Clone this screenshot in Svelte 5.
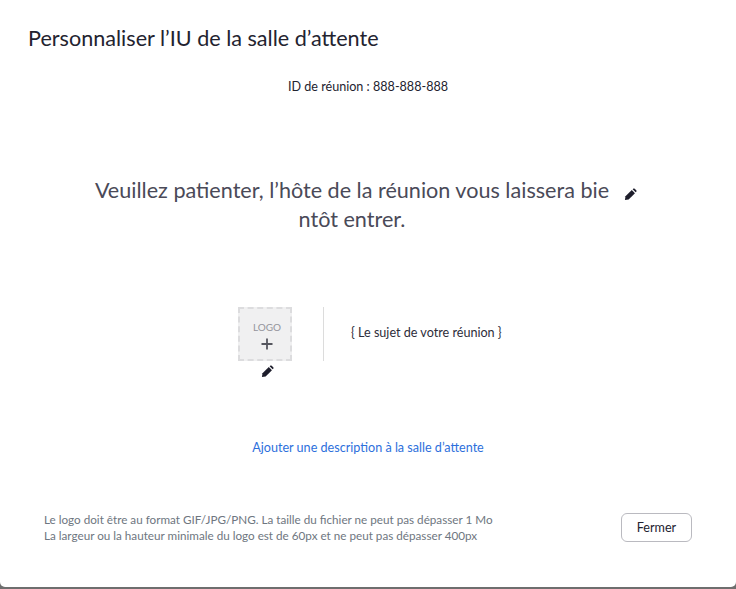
<script>
	const notes = [
		'Le logo doit être au format GIF/JPG/PNG. La taille du fichier ne peut pas dépasser 1 Mo',
		'La largeur ou la hauteur minimale du logo est de 60px et ne peut pas dépasser 400px'
	];
</script>

{#snippet pencil(cls)}
	<svg class={cls} viewBox="0 0 14 14" aria-hidden="true">
		<path d="M1 13l.6-4L8.400 2.200l3.400 3.400L5 12.400 1 13z" fill="#1d1d2b" />
		<path d="M9.300 1.400l.6-.6c.5-.5 1.100-.5 1.600 0l1.700 1.700c.5.500.5 1.100 0 1.600l-.6.600-3.300-3.300z" fill="#1d1d2b" />
	</svg>
{/snippet}

<div class="dialog">
	<h1>Personnaliser l’IU de la salle d’attente</h1>
	<p class="meeting-id">ID de réunion : 888-888-888</p>

	<div class="message">
		<h2>Veuillez patienter, l’hôte de la réunion vous laissera bientôt entrer.</h2>
		{@render pencil('edit-title')}
	</div>

	<div class="brand">
		<div class="logo-col">
			<div class="logo">
				<span>LOGO</span>
				<svg viewBox="0 0 12 12" width="12" height="12" aria-hidden="true">
					<path d="M6 .5v11M.5 6h11" stroke="#55565f" stroke-width="1.800" fill="none" />
				</svg>
			</div>
			{@render pencil('edit-logo')}
		</div>
		<div class="divider"></div>
		<div class="topic">{'{'} Le sujet de votre réunion {'}'}</div>
	</div>

	<a class="add-desc" href="#desc">Ajouter une description à la salle d’attente</a>

	<div class="footer">
		<div class="notes">
			{#each notes as note}
				<p>{note}</p>
			{/each}
		</div>
		<button>Fermer</button>
	</div>
</div>

<style>
	:global(body) {
		margin: 0;
		background: #6e6e6e;
	}

	.dialog {
		box-sizing: border-box;
		width: 736px;
		height: 587px;
		padding-top: 24px;
		display: flex;
		flex-direction: column;
		font-family: Lato, 'Open Sans', sans-serif;
		background: #fff;
		border-radius: 0 0 5px 5px;
		overflow: hidden;
	}

	h1 {
		margin: 0 0 0 28px;
		font-size: 21.6px;
		line-height: 28px;
		font-weight: 400;
		color: #23232f;
	}

	.meeting-id {
		margin: 26px 0 0;
		font-size: 12.6px;
		line-height: 18px;
		text-align: center;
		color: #23232f;
	}

	.message {
		margin: 80px 0 0 93px;
		display: flex;
		align-items: flex-start;
	}

	h2 {
		margin: 0;
		width: 518px;
		font-size: 21.6px;
		line-height: 29px;
		font-weight: 400;
		text-align: center;
		word-break: break-all;
		color: #4a4a58;
	}

	.edit-title {
		width: 13px;
		height: 13px;
		margin: 12px 0 0 13px;
		flex: none;
	}

	.brand {
		margin: 73px 0 0 238px;
		display: flex;
		align-items: flex-start;
	}

	.logo-col {
		display: flex;
		flex-direction: column;
		align-items: center;
	}

	.logo {
		box-sizing: border-box;
		width: 54px;
		height: 54px;
		display: flex;
		flex-direction: column;
		align-items: center;
		padding: 11px 0 0 4px;
		gap: 4px;
		background: #f0f0f1;
		border: 2px dashed #dcdcde;
		font-size: 10px;
		line-height: 14px;
		color: #94949c;
	}

	.edit-logo {
		width: 13px;
		height: 13px;
		margin: 4px 0 0 5px;
	}

	.divider {
		width: 1px;
		height: 54px;
		margin-left: 31px;
		background: #dcdcdc;
	}

	.topic {
		margin: 17px 0 0 27px;
		font-size: 12.6px;
		line-height: 18px;
		color: #2d2d3a;
	}

	.add-desc {
		margin-top: 61px;
		align-self: center;
		font-size: 12.6px;
		line-height: 18px;
		color: #2d6fdc;
		text-decoration: none;
	}

	.footer {
		margin: 54px 44px 0;
		display: flex;
		justify-content: space-between;
		align-items: center;
	}

	.notes p {
		margin: 0;
		font-size: 11.7px;
		line-height: 16px;
		color: #6e7680;
	}

	button {
		box-sizing: border-box;
		width: 71px;
		height: 29px;
		padding: 0;
		font: inherit;
		font-size: 12.6px;
		color: #23232f;
		background: #fff;
		border: 1px solid #babac0;
		border-radius: 6px;
	}
</style>
